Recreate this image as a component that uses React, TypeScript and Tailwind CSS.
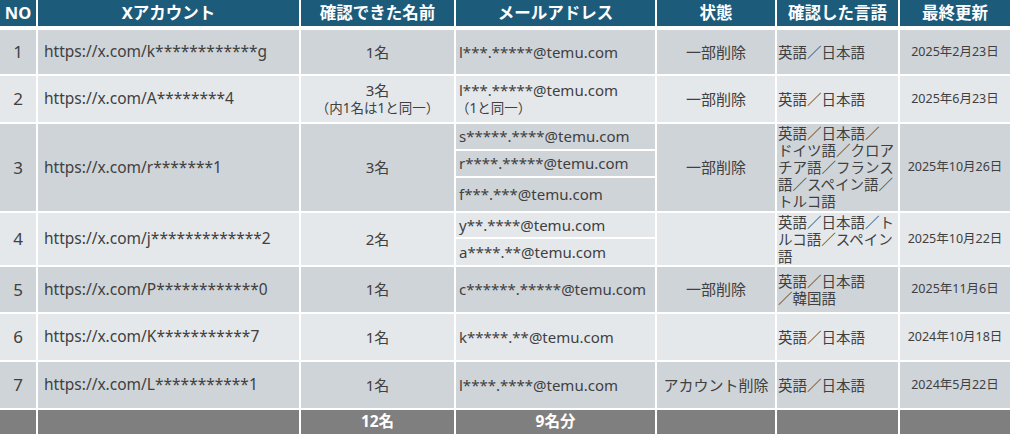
import React from "react";

const COLS = "grid grid-cols-[36px_261px_153px_199px_118px_121px_110px] gap-x-[2px]";
const DARK = "bg-[#cfd4d9]";
const LIGHT = "bg-[#e5e8eb]";

type Row = {
  no: string;
  url: string;
  names: React.ReactNode;
  emails: React.ReactNode[];
  emailHeights?: number[];
  status: string;
  langs: string[];
  date: string;
  h: number;
};

const rows: Row[] = [
  { no: "1", url: "https://x.com/k************g", names: "1名", emails: ["l***.*****@temu.com"], status: "一部削除", langs: ["英語／日本語"], date: "2025年2月23日", h: 44 },
  {
    no: "2",
    url: "https://x.com/A********4",
    names: (
      <div className="flex flex-col items-center leading-[18px]">
        <span className="text-[15px]">3名</span>
        <span className="text-[13.5px]">（内1名は1と同一）</span>
      </div>
    ),
    emails: [
      <div className="flex flex-col leading-[18px]">
        <span>l***.*****@temu.com</span>
        <span className="text-[13.5px] -ml-[3px]">（1と同一）</span>
      </div>,
    ],
    status: "一部削除",
    langs: ["英語／日本語"],
    date: "2025年6月23日",
    h: 46,
  },
  {
    no: "3",
    url: "https://x.com/r*******1",
    names: "3名",
    emails: ["s*****.****@temu.com", "r****.*****@temu.com", "f***.***@temu.com"],
    emailHeights: [25, 25, 33],
    status: "一部削除",
    langs: ["英語／日本語／", "ドイツ語／クロア", "チア語／フランス", "語／スペイン語／", "トルコ語"],
    date: "2025年10月26日",
    h: 87,
  },
  {
    no: "4",
    url: "https://x.com/j*************2",
    names: "2名",
    emails: ["y**.****@temu.com", "a****.**@temu.com"],
    emailHeights: [24, 26],
    status: "",
    langs: ["英語／日本語／ト", "ルコ語／スペイン", "語"],
    date: "2025年10月22日",
    h: 52,
  },
  { no: "5", url: "https://x.com/P************0", names: "1名", emails: ["c******.*****@temu.com"], status: "一部削除", langs: ["英語／日本語", "／韓国語"], date: "2025年11月6日", h: 45 },
  { no: "6", url: "https://x.com/K***********7", names: "1名", emails: ["k*****.**@temu.com"], status: "", langs: ["英語／日本語"], date: "2024年10月18日", h: 46 },
  { no: "7", url: "https://x.com/L***********1", names: "1名", emails: ["l****.****@temu.com"], status: "アカウント削除", langs: ["英語／日本語"], date: "2024年5月22日", h: 46 },
];

function Header() {
  const heads = ["NO", "Xアカウント", "確認できた名前", "メールアドレス", "状態", "確認した言語", "最終更新"];
  return (
    <div className={`${COLS} h-[26px]`}>
      {heads.map((h, i) => (
        <div
          key={i}
          className="bg-[#1d5b7b] text-white font-bold text-[16.5px] flex items-center justify-center leading-none"
        >
          {h}
        </div>
      ))}
    </div>
  );
}

function DataRow({ r, idx }: { r: Row; idx: number }) {
  const bg = idx % 2 === 0 ? DARK : LIGHT;
  const cell = `${bg} flex items-center`;
  return (
    <div className={COLS} style={{ height: r.h }}>
      <div className={`${cell} justify-center text-[17px]`}>{r.no}</div>
      <div className={`${cell} pl-[6px] whitespace-nowrap`}>{r.url}</div>
      <div className={`${cell} justify-center text-[15px]`}>{r.names}</div>
      {r.emailHeights ? (
        <div className="flex flex-col gap-y-[2px]">
          {r.emails.map((e, i) => (
            <div key={i} className={`${cell} pl-[3px] whitespace-nowrap text-[15px]`} style={{ height: r.emailHeights![i] }}>
              {e}
            </div>
          ))}
        </div>
      ) : (
        <div className={`${cell} pl-[3px] whitespace-nowrap text-[15px]`}>{r.emails[0]}</div>
      )}
      <div className={`${cell} justify-center whitespace-nowrap text-[15px]`}>{r.status}</div>
      <div className={`${cell} pl-[1px] text-[14.5px]`}>
        <div className="flex flex-col leading-[17px] whitespace-nowrap">
          {r.langs.map((l, i) => (
            <span key={i}>{l}</span>
          ))}
        </div>
      </div>
      <div className={`${cell} justify-center text-[12.5px] whitespace-nowrap`}>{r.date}</div>
    </div>
  );
}

function Footer() {
  const vals = ["", "", "12名", "9名分", "", "", ""];
  return (
    <div className={`${COLS} h-[24px]`}>
      {vals.map((v, i) => (
        <div key={i} className="bg-[#7f7f7f] text-white font-bold text-[15.5px] flex items-center justify-center leading-none">
          {v}
        </div>
      ))}
    </div>
  );
}

export default function App() {
  return (
    <div className="w-[1014px] h-[443px] bg-white text-[#404040] text-[15.5px] font-['Noto_Sans','Noto_Sans_CJK_JP',sans-serif] overflow-hidden">
      <div className="w-[1010px] flex flex-col">
        <Header />
        <div className="flex flex-col gap-y-[2px] mt-[4px]">
          {rows.map((r, i) => (
            <DataRow key={i} r={r} idx={i} />
          ))}
          <Footer />
        </div>
      </div>
    </div>
  );
}
